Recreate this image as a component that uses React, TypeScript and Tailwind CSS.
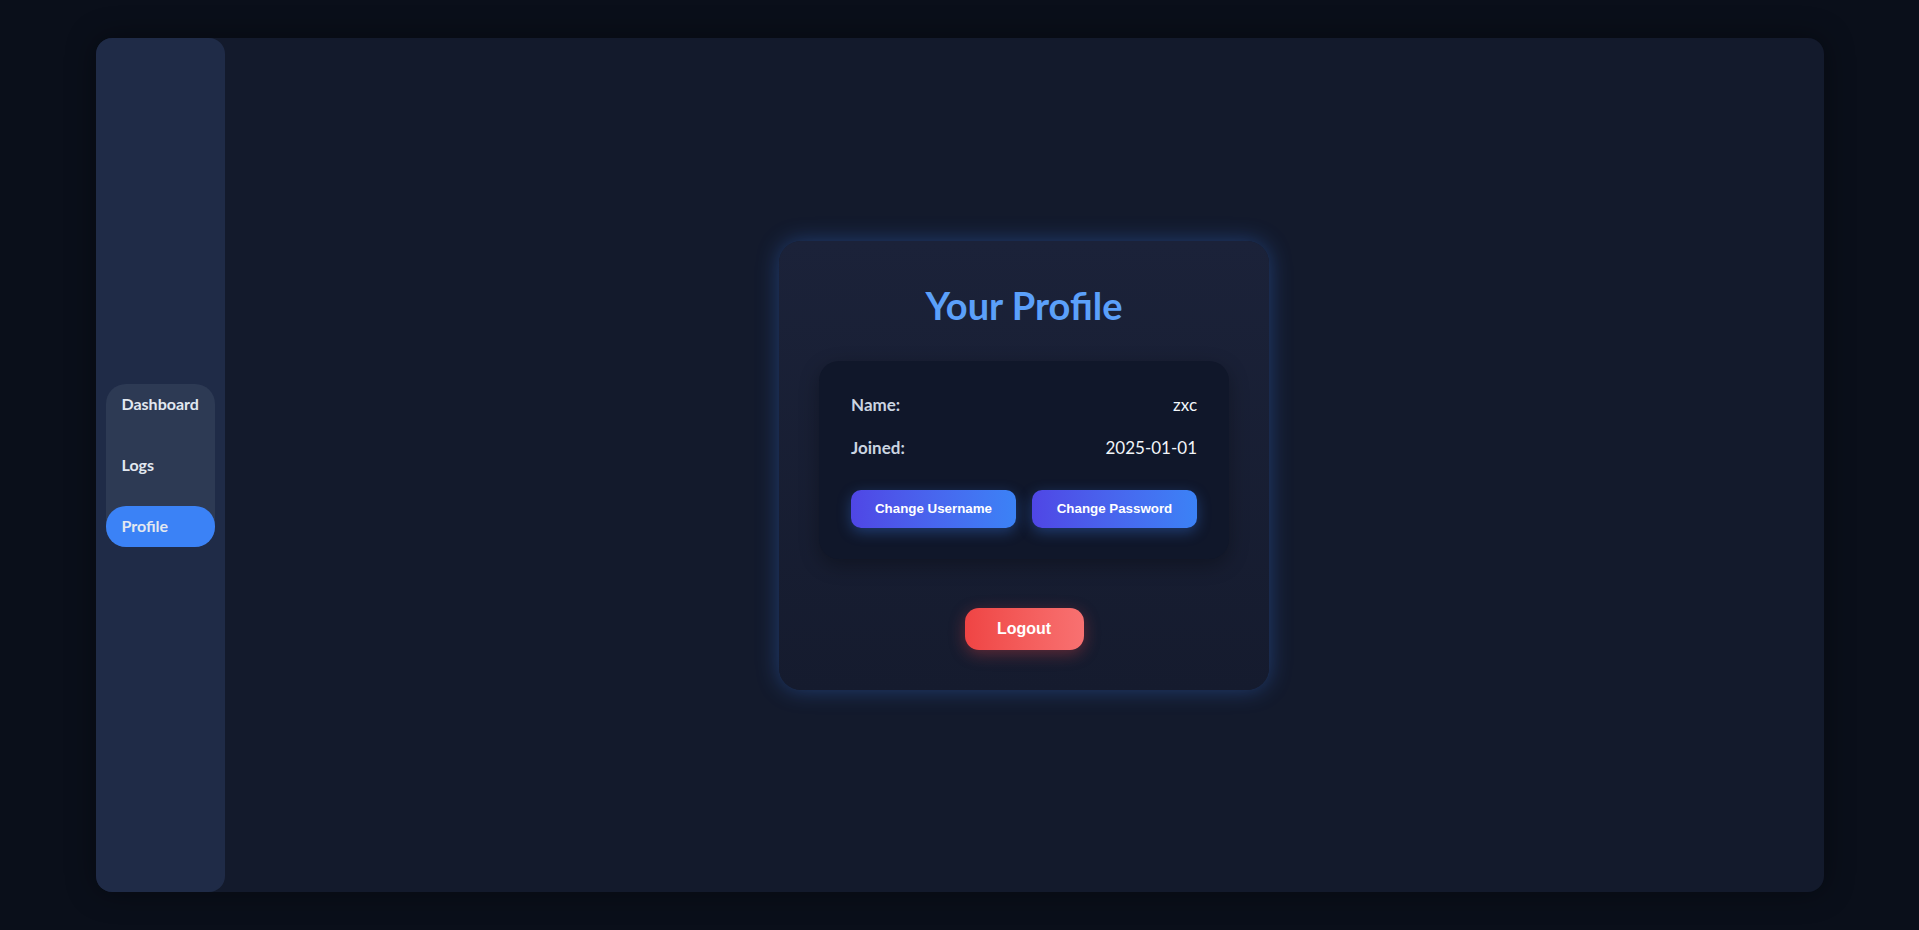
import React from "react";

export default function App() {
  return (
    <div
      className="w-full h-[930px] bg-[#0a0f1a] flex items-center justify-center"
      style={{ fontFamily: "Lato, 'Noto Sans', sans-serif" }}
    >
      <div className="w-[1728px] h-[854px] bg-[#131a2c] rounded-2xl flex shadow-[0_0_30px_rgba(0,0,0,0.4)]">
        <aside className="w-[129px] shrink-0 bg-[#1f2b47] rounded-2xl flex flex-col justify-center px-[10px]">
          <nav className="bg-[#2d3a54] rounded-[20px] flex flex-col gap-5">
            <div className="h-[41px] flex items-center pl-4 text-[16px] font-bold text-[#e2e8f0]">
              Dashboard
            </div>
            <div className="h-[41px] flex items-center pl-4 text-[16px] font-bold text-[#e2e8f0]">
              Logs
            </div>
            <div className="h-[41px] flex items-center pl-4 text-[16px] font-bold text-[#e2e8f0] bg-[#3b82f6] rounded-[20px]">
              Profile
            </div>
          </nav>
        </aside>
        <main className="flex-1 flex items-center justify-center">
          <div className="w-[490px] rounded-[22px] bg-gradient-to-b from-[#1b2239] to-[#151b2e] px-10 pt-10 pb-10 flex flex-col items-center shadow-[0_0_22px_rgba(59,130,246,0.35)]">
            <h2 className="text-[38px] leading-[48px] font-bold text-[#5ba0fa] mb-8">
              Your Profile
            </h2>
            <div className="w-full bg-[#10172a] rounded-[20px] px-8 pt-8 pb-[31px] shadow-[0_6px_20px_rgba(0,0,0,0.3)]">
              <div className="flex justify-between h-6 items-center text-[17px]">
                <span className="font-bold text-[#cbd5e1]">Name:</span>
                <span className="text-[#f1f5f9]">zxc</span>
              </div>
              <div className="flex justify-between h-6 items-center text-[17px] mt-[19px]">
                <span className="font-bold text-[#cbd5e1]">Joined:</span>
                <span className="text-[#f1f5f9]">2025-01-01</span>
              </div>
              <div
                className="flex gap-4 mt-[30px]"
                style={{ fontFamily: "'Liberation Sans', Arial, sans-serif" }}
              >
                <button className="flex-1 h-[38px] rounded-[10px] bg-gradient-to-r from-[#4f46e5] to-[#3b82f6] text-white text-[13.33px] font-bold shadow-[0_4px_14px_rgba(59,130,246,0.35)]">
                  Change Username
                </button>
                <button className="flex-1 h-[38px] rounded-[10px] bg-gradient-to-r from-[#4f46e5] to-[#3b82f6] text-white text-[13.33px] font-bold shadow-[0_4px_14px_rgba(59,130,246,0.35)]">
                  Change Password
                </button>
              </div>
            </div>
            <button
              className="mt-[49px] w-[119px] h-[42px] rounded-[14px] bg-gradient-to-r from-[#ef4444] to-[#f87171] text-white text-[16px] font-bold shadow-[0_4px_16px_rgba(239,68,68,0.35)]"
              style={{ fontFamily: "'Liberation Sans', Arial, sans-serif" }}
            >
              Logout
            </button>
          </div>
        </main>
      </div>
    </div>
  );
}
